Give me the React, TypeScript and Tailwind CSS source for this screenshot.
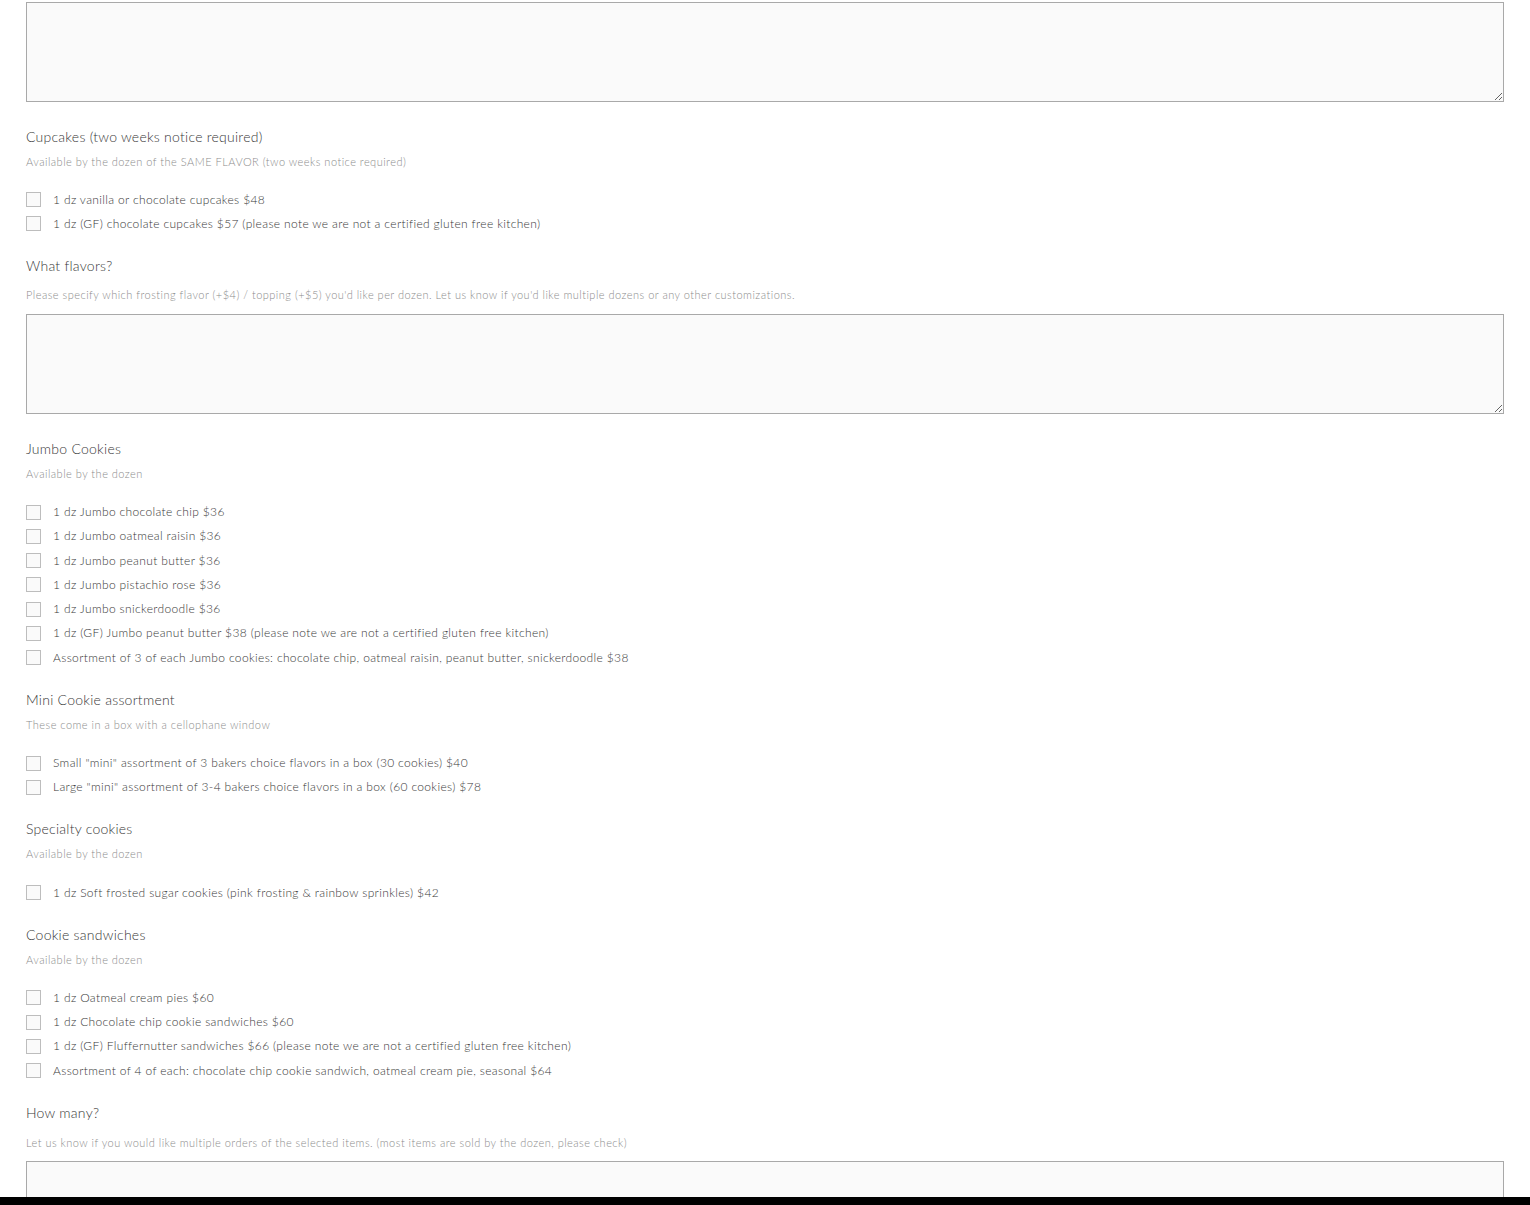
import React from "react";

const font = { fontFamily: "Lato, 'Open Sans', sans-serif" };

function Heading({ children }: { children: React.ReactNode }) {
  return (
    <div className="h-[20px] leading-[20px] text-[14px] font-light tracking-[0.25px] text-[#383838]">{children}</div>
  );
}

function Desc({ children, mt }: { children: React.ReactNode; mt: string }) {
  return (
    <div className={`${mt} h-[16px] leading-[16px] text-[11px] font-light tracking-[0.48px] text-[#8c8c8c]`}>{children}</div>
  );
}

function Check({ label }: { label: string }) {
  return (
    <label className="flex h-[24.27px] items-center gap-[12px]">
      <span className="h-[15px] w-[15px] shrink-0 border border-[#bdbdbd] bg-[#fafafa]" />
      <span className="text-[12px] font-light tracking-[0.35px] text-[#383838]">{label}</span>
    </label>
  );
}

function CheckList({ items, mt = "mt-[18px]" }: { items: string[]; mt?: string }) {
  return (
    <div className={`${mt} flex flex-col`}>
      {items.map((t) => (
        <Check key={t} label={t} />
      ))}
    </div>
  );
}

function CheckSection({ title, desc, items }: { title: string; desc: string; items: string[] }) {
  return (
    <div className="mt-[20px]">
      <Heading>{title}</Heading>
      <Desc mt="mt-[7px]">{desc}</Desc>
      <CheckList items={items} />
    </div>
  );
}

function Area() {
  return (
    <textarea className="block h-[100px] w-full border border-[#a9a9a9] bg-[#fafafa] outline-none" />
  );
}

export default function App() {
  return (
    <div className="flex h-[1205px] flex-col overflow-hidden bg-white" style={font}>
      <div className="flex-1 overflow-hidden px-[26px] pt-[2px]">
        <Area />
        <div className="mt-[25px]">
          <Heading>Cupcakes (two weeks notice required)</Heading>
          <Desc mt="mt-[7px]">Available by the dozen of the SAME FLAVOR (two weeks notice required)</Desc>
          <CheckList
            mt="mt-[17.5px]"
            items={[
              "1 dz vanilla or chocolate cupcakes $48",
              "1 dz (GF) chocolate cupcakes $57 (please note we are not a certified gluten free kitchen)",
            ]}
          />
        </div>
        <div className="mt-[20px]">
          <Heading>What flavors?</Heading>
          <Desc mt="mt-[11px]">
            Please specify which frosting flavor (+$4) / topping (+$5) you'd like per dozen. Let us know if you'd like multiple dozens or any other customizations.
          </Desc>
          <div className="mt-[11px]">
            <Area />
          </div>
        </div>
        <div className="mt-[25px]">
          <Heading>Jumbo Cookies</Heading>
          <Desc mt="mt-[7px]">Available by the dozen</Desc>
          <CheckList
            items={[
              "1 dz Jumbo chocolate chip $36",
              "1 dz Jumbo oatmeal raisin $36",
              "1 dz Jumbo peanut butter $36",
              "1 dz Jumbo pistachio rose $36",
              "1 dz Jumbo snickerdoodle $36",
              "1 dz (GF) Jumbo peanut butter $38 (please note we are not a certified gluten free kitchen)",
              "Assortment of 3 of each Jumbo cookies: chocolate chip, oatmeal raisin, peanut butter, snickerdoodle $38",
            ]}
          />
        </div>
        <CheckSection
          title="Mini Cookie assortment"
          desc="These come in a box with a cellophane window"
          items={[
            'Small "mini" assortment of 3 bakers choice flavors in a box (30 cookies) $40',
            'Large "mini" assortment of 3-4 bakers choice flavors in a box (60 cookies) $78',
          ]}
        />
        <CheckSection
          title="Specialty cookies"
          desc="Available by the dozen"
          items={["1 dz Soft frosted sugar cookies (pink frosting & rainbow sprinkles) $42"]}
        />
        <CheckSection
          title="Cookie sandwiches"
          desc="Available by the dozen"
          items={[
            "1 dz Oatmeal cream pies $60",
            "1 dz Chocolate chip cookie sandwiches $60",
            "1 dz (GF) Fluffernutter sandwiches $66 (please note we are not a certified gluten free kitchen)",
            "Assortment of 4 of each: chocolate chip cookie sandwich, oatmeal cream pie, seasonal $64",
          ]}
        />
        <div className="mt-[20.5px]">
          <Heading>How many?</Heading>
          <Desc mt="mt-[12px]">
            Let us know if you would like multiple orders of the selected items. (most items are sold by the dozen, please check)
          </Desc>
          <div className="mt-[10px]">
            <Area />
          </div>
        </div>
      </div>
      <div className="h-[8px] shrink-0 bg-black" />
    </div>
  );
}
